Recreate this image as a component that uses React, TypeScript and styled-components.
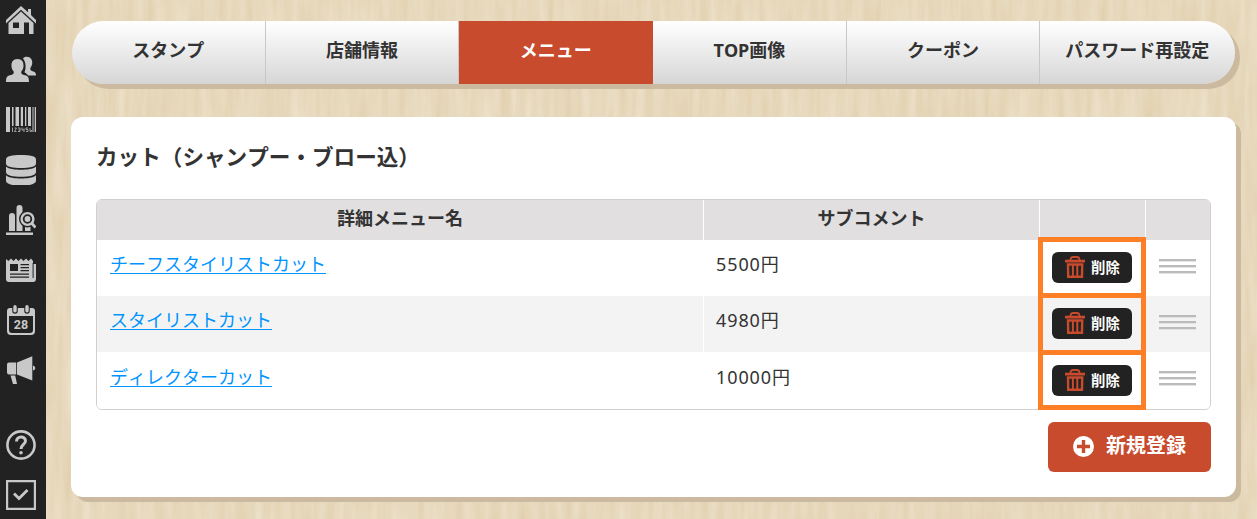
import React from "react";
import styled, { createGlobalStyle, css } from "styled-components";

const GlobalStyle = createGlobalStyle`
  * { box-sizing: border-box; }
  html, body { margin: 0; height: 100%; }
  body {
    background: #e8d9be;
    color: #333;
    font-family: "Noto Sans", "Noto Sans CJK JP", sans-serif;
    font-size: 18px;
    line-height: 27px;
    font-kerning: none;
    overflow: hidden;
  }
`;

const Page = styled.div`
  position: relative;
  display: flex;
  height: 519px;
  overflow: hidden;
`;

const Wood = styled.svg`
  position: absolute;
  inset: 0;
  width: 100%;
  height: 100%;
`;

const Sidebar = styled.nav`
  position: relative;
  flex: 0 0 46px;
  padding: 5px 0 0 6px;
  background: #222;
  display: flex;
  flex-direction: column;
  gap: 20px;
`;

const SideIcon = styled.svg<{ $gap?: boolean }>`
  flex: none;
  display: block;
  width: 30px;
  height: 30px;
  fill: #c8c8c8;
  ${(p) => p.$gap && css`margin-top: 25px;`}
`;

const Main = styled.main`
  position: relative;
  flex: 1;
  padding: 21px 21px 0 25px;
`;

const Tabs = styled.div`
  display: flex;
  width: 1163px;
  height: 63px;
  margin-left: 1px;
  border-radius: 32px;
  background: linear-gradient(#fff, #d6d6d6);
  box-shadow: 5px 5px 0 #cbba9f;
`;

const Tab = styled.a<{ $active?: boolean }>`
  flex: 0 0 193.7px;
  padding-top: 16px;
  border-right: 1px solid #c8c8c8;
  font-weight: 700;
  text-align: center;
  white-space: nowrap;
  &:last-child { border-right: 0; }
  ${(p) => p.$active && css`
    background: #c84b2d;
    border-color: #c84b2d;
    color: #fff;
  `}
`;

const Card = styled.section`
  width: 1165px;
  height: 380px;
  margin-top: 33px;
  padding: 24px 25px 0;
  border-radius: 12px;
  background: #fff;
  box-shadow: 5px 5px 0 #cbba9f;
`;

const Title = styled.h1`
  margin: 0 0 26px;
  font-size: 21.6px;
  line-height: 32px;
  font-weight: 700;
`;

const Table = styled.div`
  width: 1115px;
  border: 1px solid #d0d0d0;
  border-radius: 6px;
`;

const Row = styled.div`
  display: grid;
  grid-template-columns: 607px 336px 106px 64px;
  height: 56px;
  background: #fff;
  &:nth-child(odd) { background: #f3f3f3; }
  &:last-child { height: 57px; border-radius: 0 0 5px 5px; background: #fff; }
`;

const HeadRow = styled(Row)`
  height: 40px;
  border-radius: 5px 5px 0 0;
  &:nth-child(odd) { background: #e1dfe0; }
`;

const HeadCell = styled.div`
  padding-top: 5px;
  border-right: 1px solid #fff;
  font-weight: 700;
  text-align: center;
  &:last-child { border-right: 0; }
`;

const Cell = styled.div<{ $low?: boolean }>`
  position: relative;
  padding: ${(p) => (p.$low ? 12 : 11)}px 12px 0;
  border-right: 1px solid #fff;
`;

const NameCell = styled(Cell)`
  padding-left: 13px;
`;

const PriceCell = styled(Cell)`
  letter-spacing: 0.9px;
`;

const MenuLink = styled.a`
  color: #0094ff;
  text-decoration: underline;
  text-decoration-thickness: 1px;
  text-underline-offset: 1.5px;
  text-decoration-skip-ink: none;
`;

const Highlight = styled.div<{ $top: number; $height: number }>`
  position: absolute;
  left: -2px;
  top: ${(p) => p.$top}px;
  width: 108px;
  height: ${(p) => p.$height}px;
  border: 5px solid #ff7f27;
  pointer-events: none;
`;

const DeleteButton = styled.button`
  display: flex;
  align-items: center;
  gap: 6px;
  width: 80px;
  height: 31px;
  margin: 1px 0 0;
  padding: 0 0 1px 13px;
  border: 0;
  border-radius: 6px;
  background: #222;
  color: #fff;
  font: 700 14.4px/22px "Noto Sans CJK JP", sans-serif;
  white-space: nowrap;
`;

const Handle = styled.div`
  display: flex;
  flex-direction: column;
  gap: 4px;
  width: 37px;
  margin: 19px 0 0 13px;
`;

const HandleBar = styled.span`
  height: 2px;
  background: #bbb;
  box-shadow: 0 1px 0 #e3e3e3;
`;

const Actions = styled.div`
  display: flex;
  justify-content: flex-end;
  padding-top: 12px;
`;

const NewButton = styled.button`
  display: flex;
  align-items: center;
  gap: 12px;
  width: 163px;
  height: 50px;
  padding: 0 0 1px 25px;
  border: 0;
  border-radius: 6px;
  background: #c84b2d;
  color: #fff;
  font: 700 20px/30px "Noto Sans CJK JP", sans-serif;
  white-space: nowrap;
`;

const Label = styled.span<{ $up: number }>`
  padding-bottom: ${(p) => p.$up}px;
`;

const BG = "#222";

function WoodGrain() {
  return (
    <Wood aria-hidden="true">
      <filter id="grain" x="0" y="0" width="100%" height="100%" colorInterpolationFilters="sRGB">
        <feTurbulence type="fractalNoise" baseFrequency="0.11 0.012" numOctaves="3" seed="8" />
        <feColorMatrix
          values="0.05 0 0 0 0.880
                  0.08 0 0 0 0.808
                  0.13 0 0 0 0.672
                  0 0 0 0 1"
        />
      </filter>
      <rect width="100%" height="100%" filter="url(#grain)" />
    </Wood>
  );
}

function SideIcons() {
  return (
    <>
      <SideIcon viewBox="0 0 30 30">
        <path d="M15 1 22 7.200V4h3v6l5 5v3.500L15 4.800 0 18.500V15z" />
        <path d="M15 6.500 27.500 18v11h-25V18z" />
        <path fill={BG} d="M7 17.500h6v5.500H7zM18 17.500h5V29h-5z" />
      </SideIcon>
      <SideIcon viewBox="0 0 30 30">
        <path d="M17 3.500C18.500 1 24.500 1 26 5.500c.8 3-.3 6-1.600 7.500-.5 2 .6 2.800 3 3.600 2 .6 2.600 1.800 2.600 4H22c-1-1.800-2.600-2.600-3.600-3.300C20 14 20.500 8 17 3.500z" />
        <path d="M11.500 4c4.500 0 6.200 3.200 6 7-.1 2.500-1 4.300-2.200 5.500-.5 2.400.7 3 3.700 3.800 3.200.9 4 2.200 4 6.700H0c0-4.500.9-5.800 4-6.700 3-.8 4.200-1.400 3.700-3.800C6.500 15.300 5.600 13.500 5.500 11c-.2-3.800 1.500-7 6-7z" />
      </SideIcon>
      <SideIcon viewBox="0 0 30 30">
        <path d="M0 2h4v25H0zM6 2h1.500v19H6zM9.500 2H13v19H9.500zM14.800 2H17v19h-2.200zM19 2h1.300v19H19zM22 2h3v19h-3zM26.500 2h1v25h-1zM28.700 2H30v25h-1.300z" />
        <path fill="none" stroke="#a0a0a0" d="M6.500 22.500V27M8.500 23h2l-2 3.500h2M12 23h2v3.500h-2M14 25h-1.500M16 22.500V25h2.500M18 23.500V27M22 23h-2v1.500h2v2h-2M24 23v3.500h1.500V25" />
      </SideIcon>
      <SideIcon viewBox="0 0 30 30">
        <path d="M0 4.500C0 1 6 0 15 0s15 1 15 4.500v4C30 12 23 13 15 13S0 12 0 8.500z" />
        <path d="M0 11.500c3 2.700 9 3.200 15 3.200s12-.5 15-3.200V17c0 3.500-7 4.800-15 4.800S0 20.500 0 17zM0 20.300c3 2.700 9 3.200 15 3.200s12-.5 15-3.200v5.500c0 3.500-7 4.900-15 4.900S0 29.300 0 25.800z" />
      </SideIcon>
      <SideIcon viewBox="0 0 30 30">
        <path d="M0 27.500h27V30H0zM3 11q0-3 3-3t3 3v15H3zM10.500 3q0-3 3-3t3 3v23h-6zM19 20h5.500v6H19z" />
        <path stroke={BG} strokeWidth="6" d="m25 18 4 4" />
        <circle cx="21.500" cy="14" r="8.500" fill={BG} />
        <circle cx="21.500" cy="14" r="5.900" fill="none" stroke="#c8c8c8" strokeWidth="2.400" />
        <circle cx="21.500" cy="14" r="2.900" />
        <path stroke="#c8c8c8" strokeWidth="2.800" d="m25.500 18 4 4.500" />
      </SideIcon>
      <SideIcon viewBox="0 0 30 30">
        <path d="M0 4l2.500 2L5 3.500 7.500 6 10 3.500 12.500 6 15 3.500 17.500 6 20 3.500 22.500 6 25 3.500 27 6v2h3v15.500q0 3.500-3 3.500H3q-3 0-3-3z" />
        <path fill={BG} d="M4 9h8v7H4zM14.500 9H23v1.300h-8.500zM14.500 12H23v1.300h-8.500zM14.500 15H23v1.300h-8.500zM4 18.500h19v1.300H4zM4 21.500h19v1.300H4zM26.600 8h1v15h-1zM27 6h3v3h-3z" />
      </SideIcon>
      <SideIcon viewBox="0 0 30 30">
        <path fillRule="evenodd" d="M4 3h22q3 0 3 3v20q0 4-4 4H5q-4 0-4-4V6q0-3 3-3zm-1 8v14q0 3 3 3h18q3 0 3-3V11z" />
        <path stroke={BG} strokeWidth="5.500" strokeLinecap="round" d="M9 1v5M21 1v5" />
        <path stroke="#c8c8c8" strokeWidth="3.400" strokeLinecap="round" d="M9 1.800v4M21 1.800v4" />
        <text x="15" y="23.500" textAnchor="middle" fontSize="12.500" fontWeight="700" fontFamily="Roboto, sans-serif">28</text>
      </SideIcon>
      <SideIcon viewBox="0 0 30 30">
        <path d="M3 7.500h7.200v12H3q-2 0-2-2v-8q0-2 2-2zM11 7.500 26.300 1.300v24.200L11 19.500zM27 10.500q2.300.5 2.300 2.500T27 15.500zM4.500 20.500h4.700L11 29H7z" />
      </SideIcon>
      <SideIcon $gap viewBox="0 0 30 30">
        <circle cx="15" cy="15" r="13.600" fill="none" stroke="#c8c8c8" strokeWidth="2.600" />
        <path fill="none" stroke="#c8c8c8" strokeWidth="3" d="M10.500 11.500C10.500 5.500 19.500 5.800 19.500 11c0 3.500-4.500 3.300-4.500 8" />
        <circle cx="15" cy="22.800" r="1.800" />
      </SideIcon>
      <SideIcon viewBox="0 0 30 30">
        <path fill="none" stroke="#c8c8c8" strokeWidth="2.200" d="M1.100 1.100h27.800v27.800H1.100z" />
        <path fill="none" stroke="#c8c8c8" strokeWidth="2.800" d="m8 13.500 5 5 8.500-8.500" />
      </SideIcon>
    </>
  );
}

function Trash() {
  return (
    <svg width="20" height="22" viewBox="0 0 20 22" fill="none" stroke="#c84b2d">
      <path strokeWidth="1.800" d="M5.500 4.500V3.500Q6 1 8 1h4q2 0 2.500 2.500v1" />
      <path strokeWidth="2.800" d="M0 5.100h20" />
      <path strokeWidth="2.400" d="M3 8.500h14.200L17 20.800H3.200z" />
      <path strokeWidth="2" d="M7.900 8v13M12.300 8v13" />
    </svg>
  );
}

function PlusCircle() {
  return (
    <svg width="21" height="21" viewBox="0 0 21 21">
      <circle cx="10.500" cy="10.500" r="10.500" fill="#fff" />
      <path stroke="#c84b2d" strokeWidth="3.400" d="M10.500 4v13M4 10.500h13" />
    </svg>
  );
}

const tabs = ["スタンプ", "店舗情報", "メニュー", "TOP画像", "クーポン", "パスワード再設定"];

const items = [
  { name: "チーフスタイリストカット", price: "5500円", top: -3, height: 61 },
  { name: "スタイリストカット", price: "4980円", top: -3, height: 62 },
  { name: "ディレクターカット", price: "10000円", top: -2, height: 60 },
];

export default function App() {
  return (
    <>
      <GlobalStyle />
      <Page>
        <WoodGrain />
        <Sidebar>
          <SideIcons />
        </Sidebar>
        <Main>
          <Tabs>
            {tabs.map((t) => (
              <Tab key={t} $active={t === "メニュー"}>{t}</Tab>
            ))}
          </Tabs>
          <Card>
            <Title>カット（シャンプー・ブロー込）</Title>
            <Table>
              <HeadRow>
                <HeadCell>詳細メニュー名</HeadCell>
                <HeadCell>サブコメント</HeadCell>
                <HeadCell />
                <HeadCell />
              </HeadRow>
              {items.map((item, i) => (
                <Row key={item.name}>
                  <NameCell $low={i === 2}>
                    <MenuLink>{item.name}</MenuLink>
                  </NameCell>
                  <PriceCell $low={i === 2}>{item.price}</PriceCell>
                  <Cell $low={i === 2}>
                    <DeleteButton>
                      <Trash />
                      <Label $up={1}>削除</Label>
                    </DeleteButton>
                    <Highlight $top={item.top} $height={item.height} />
                  </Cell>
                  <Handle>
                    <HandleBar />
                    <HandleBar />
                    <HandleBar />
                  </Handle>
                </Row>
              ))}
            </Table>
            <Actions>
              <NewButton>
                <PlusCircle />
                <Label $up={3}>新規登録</Label>
              </NewButton>
            </Actions>
          </Card>
        </Main>
      </Page>
    </>
  );
}
